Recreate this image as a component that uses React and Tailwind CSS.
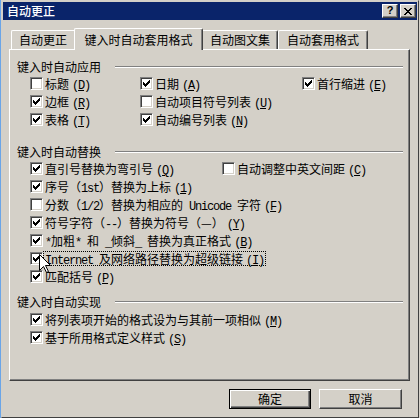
import React from 'react';

const mono = "font-['Liberation_Mono',monospace] text-[12px] tracking-[-1.2px]";
const raised = 'border border-t-white border-l-white border-r-[#404040] border-b-[#404040] shadow-[inset_-1px_-1px_0_#808080]';

// ASCII runs are set in a monospace face, like SimSun's half-width glyphs
const Txt = ({ s }) =>
  s.split(/([\x20-\x7e]+)/).map((p, i) =>
    /^[\x20-\x7e]+$/.test(p) ? <span key={i} className={mono}>{p}</span> : p
  );

const Check = ({ on }) => (
  <span className="mt-[2px] w-[13px] h-[13px] shrink-0 flex items-center justify-center bg-white border border-t-[#808080] border-l-[#808080] border-r-white border-b-white shadow-[inset_1px_1px_0_#404040,inset_-1px_-1px_0_#d4d0c8]">
    {on && (
      <svg width="7" height="7" viewBox="0 0 7 7" shapeRendering="crispEdges">
        <path d="M6 0h1v1h-1z M5 1h2v1h-2z M0 2h1v1h-1z M4 2h3v1h-3z M0 3h2v1h-2z M3 3h3v1h-3z M0 4h5v1h-5z M1 5h3v1h-3z M2 6h1v1h-1z" fill="#000" />
      </svg>
    )}
  </span>
);

const Row = ({ on, label, k, cls = '', focus }) => (
  <div className={`flex items-start h-[18px] shrink-0 ${cls}`}>
    <Check on={on} />
    {focus ? (
      <span className="mt-[1px] h-[15px] pl-[1px] pr-[1px] leading-[13px] whitespace-nowrap border border-dotted border-black">
        <Txt s={label} />
        <span className={`${mono} ml-[3px]`}>(<u className="underline-offset-1">{k}</u>)</span>
      </span>
    ) : (
      <span className="ml-[2px] leading-[18px] whitespace-nowrap">
        <Txt s={label} />
        <span className={`${mono} ml-[3px]`}>(<u className="underline-offset-1">{k}</u>)</span>
      </span>
    )}
  </div>
);

const Group = ({ title, h, mt }) => (
  <div className={`flex items-center ${h} ${mt}`}>
    <span className="whitespace-nowrap">{title}</span>
    <div className="flex-1 ml-[14px] mr-[6px] h-[2px] border-t border-t-[#808080] border-b border-b-white" />
  </div>
);

export default function App() {
  return (
    <div className="relative w-[420px] h-[418px] flex bg-[#d4d0c8] text-[12px] text-black font-['Noto_Sans_CJK_SC',sans-serif] overflow-hidden">
      <div className="w-[1px] h-full bg-[#6aa5e8]" />
      <div className="w-[418px] h-[418px] flex flex-col p-[1px] border border-t-[#d4d0c8] border-l-[#d4d0c8] border-r-[#404040] border-b-[#404040]">
        {/* title bar */}
        <div className="h-[18px] shrink-0 flex items-center bg-[#0a246a] pl-[4px] pr-[1px]">
          <span className="text-white leading-[18px] font-medium">自动更正</span>
          <div className="ml-auto flex gap-[2px]">
            <div className={`w-[16px] h-[14px] flex items-center justify-center bg-[#d4d0c8] ${raised}`}>
              <span className="font-['Liberation_Sans',sans-serif] font-bold text-[11px] leading-none -mt-[1px]">?</span>
            </div>
            <div className={`w-[16px] h-[14px] flex items-center justify-center bg-[#d4d0c8] ${raised}`}>
              <svg width="8" height="7" viewBox="0 0 8 7" shapeRendering="crispEdges">
                <path d="M0 0h2v1h-2z M6 0h2v1h-2z M1 1h2v1h-2z M5 1h2v1h-2z M2 2h4v1h-4z M3 3h2v1h-2z M2 4h4v1h-4z M1 5h2v1h-2z M5 5h2v1h-2z M0 6h2v1h-2z M6 6h2v1h-2z" fill="#000" />
              </svg>
            </div>
          </div>
        </div>

        {/* tabs */}
        <div className="mt-[8px] ml-[8px] h-[21px] flex items-end relative z-10">
          <div className="w-[63px] h-[19px] flex items-center justify-center border-t border-l border-t-white border-l-white rounded-tl-[2px]">
            自动更正
          </div>
          <div className="w-[129px] h-[22px] -mb-[1px] flex items-center justify-center bg-[#d4d0c8] border-t border-l border-r border-t-white border-l-white border-r-[#404040] shadow-[inset_-1px_0_0_#808080] rounded-t-[2px]">
            键入时自动套用格式
          </div>
          <div className="w-[75px] h-[19px] flex items-center justify-center border-t border-r border-t-white border-r-[#404040] shadow-[inset_-1px_0_0_#808080] rounded-tr-[2px]">
            自动图文集
          </div>
          <div className="w-[90px] h-[19px] flex items-center justify-center border-t border-l border-r border-t-white border-l-white border-r-[#404040] shadow-[inset_-1px_0_0_#808080] rounded-t-[2px]">
            自动套用格式
          </div>
        </div>

        {/* panel */}
        <div className={`ml-[6px] w-[401px] h-[332px] shrink-0 flex flex-col pt-[8px] pl-[7px] ${raised}`}>
          <Group title="键入时自动应用" h="h-[17px]" mt="" />
          <div className="ml-[13px] grid grid-cols-[110px_162px_auto]">
            <Row on={false} label="标题" k="D" cls="h-[17px]" />
            <Row on label="日期" k="A" cls="h-[17px]" />
            <Row on label="首行缩进" k="E" cls="h-[17px]" />
            <Row on label="边框" k="R" />
            <Row on={false} label="自动项目符号列表" k="U" />
            <div />
            <Row on label="表格" k="T" />
            <Row on label="自动编号列表" k="N" />
            <div />
          </div>

          <Group title="键入时自动替换" h="h-[16px]" mt="mt-[15px]" />
          <div className="ml-[13px] flex flex-col">
            <div className="flex">
              <Row on label="直引号替换为弯引号" k="Q" cls="w-[192px]" />
              <Row on={false} label="自动调整中英文间距" k="C" />
            </div>
            <Row on label="序号（1st）替换为上标" k="1" />
            <Row on={false} label="分数（1/2）替换为相应的 Unicode 字符" k="F" />
            <Row on label="符号字符（--）替换为符号（—）" k="Y" />
            <Row on label="*加粗* 和 _倾斜_ 替换为真正格式" k="B" />
            <Row on label="Internet 及网络路径替换为超级链接" k="I" focus />
            <Row on label="匹配括号" k="P" />
          </div>

          <Group title="键入时自动实现" h="h-[18px]" mt="mt-[7px]" />
          <div className="ml-[13px] flex flex-col">
            <Row on label="将列表项开始的格式设为与其前一项相似" k="M" />
            <Row on label="基于所用格式定义样式" k="S" />
          </div>
        </div>

        {/* buttons */}
        <div className="mt-[8px] ml-[226px] flex gap-[8px]">
          <div className="w-[82px] h-[20px] flex items-center justify-center border border-black shadow-[inset_1px_1px_0_#fff,inset_-1px_-1px_0_#404040,inset_-2px_-2px_0_#808080]">
            确定
          </div>
          <div className={`w-[83px] h-[20px] flex items-center justify-center ${raised}`}>取消</div>
        </div>
      </div>

      {/* mouse pointer */}
      <svg className="absolute left-[39px] top-[254px]" width="13" height="20" viewBox="0 0 13 20">
        <path d="M0.5 0.5 L0.5 16.5 L4.5 12.5 L7.5 18.5 L9.5 17.5 L6.5 11.5 L11.5 11.5 Z" fill="#fff" stroke="#000" strokeWidth="1" />
      </svg>
    </div>
  );
}
